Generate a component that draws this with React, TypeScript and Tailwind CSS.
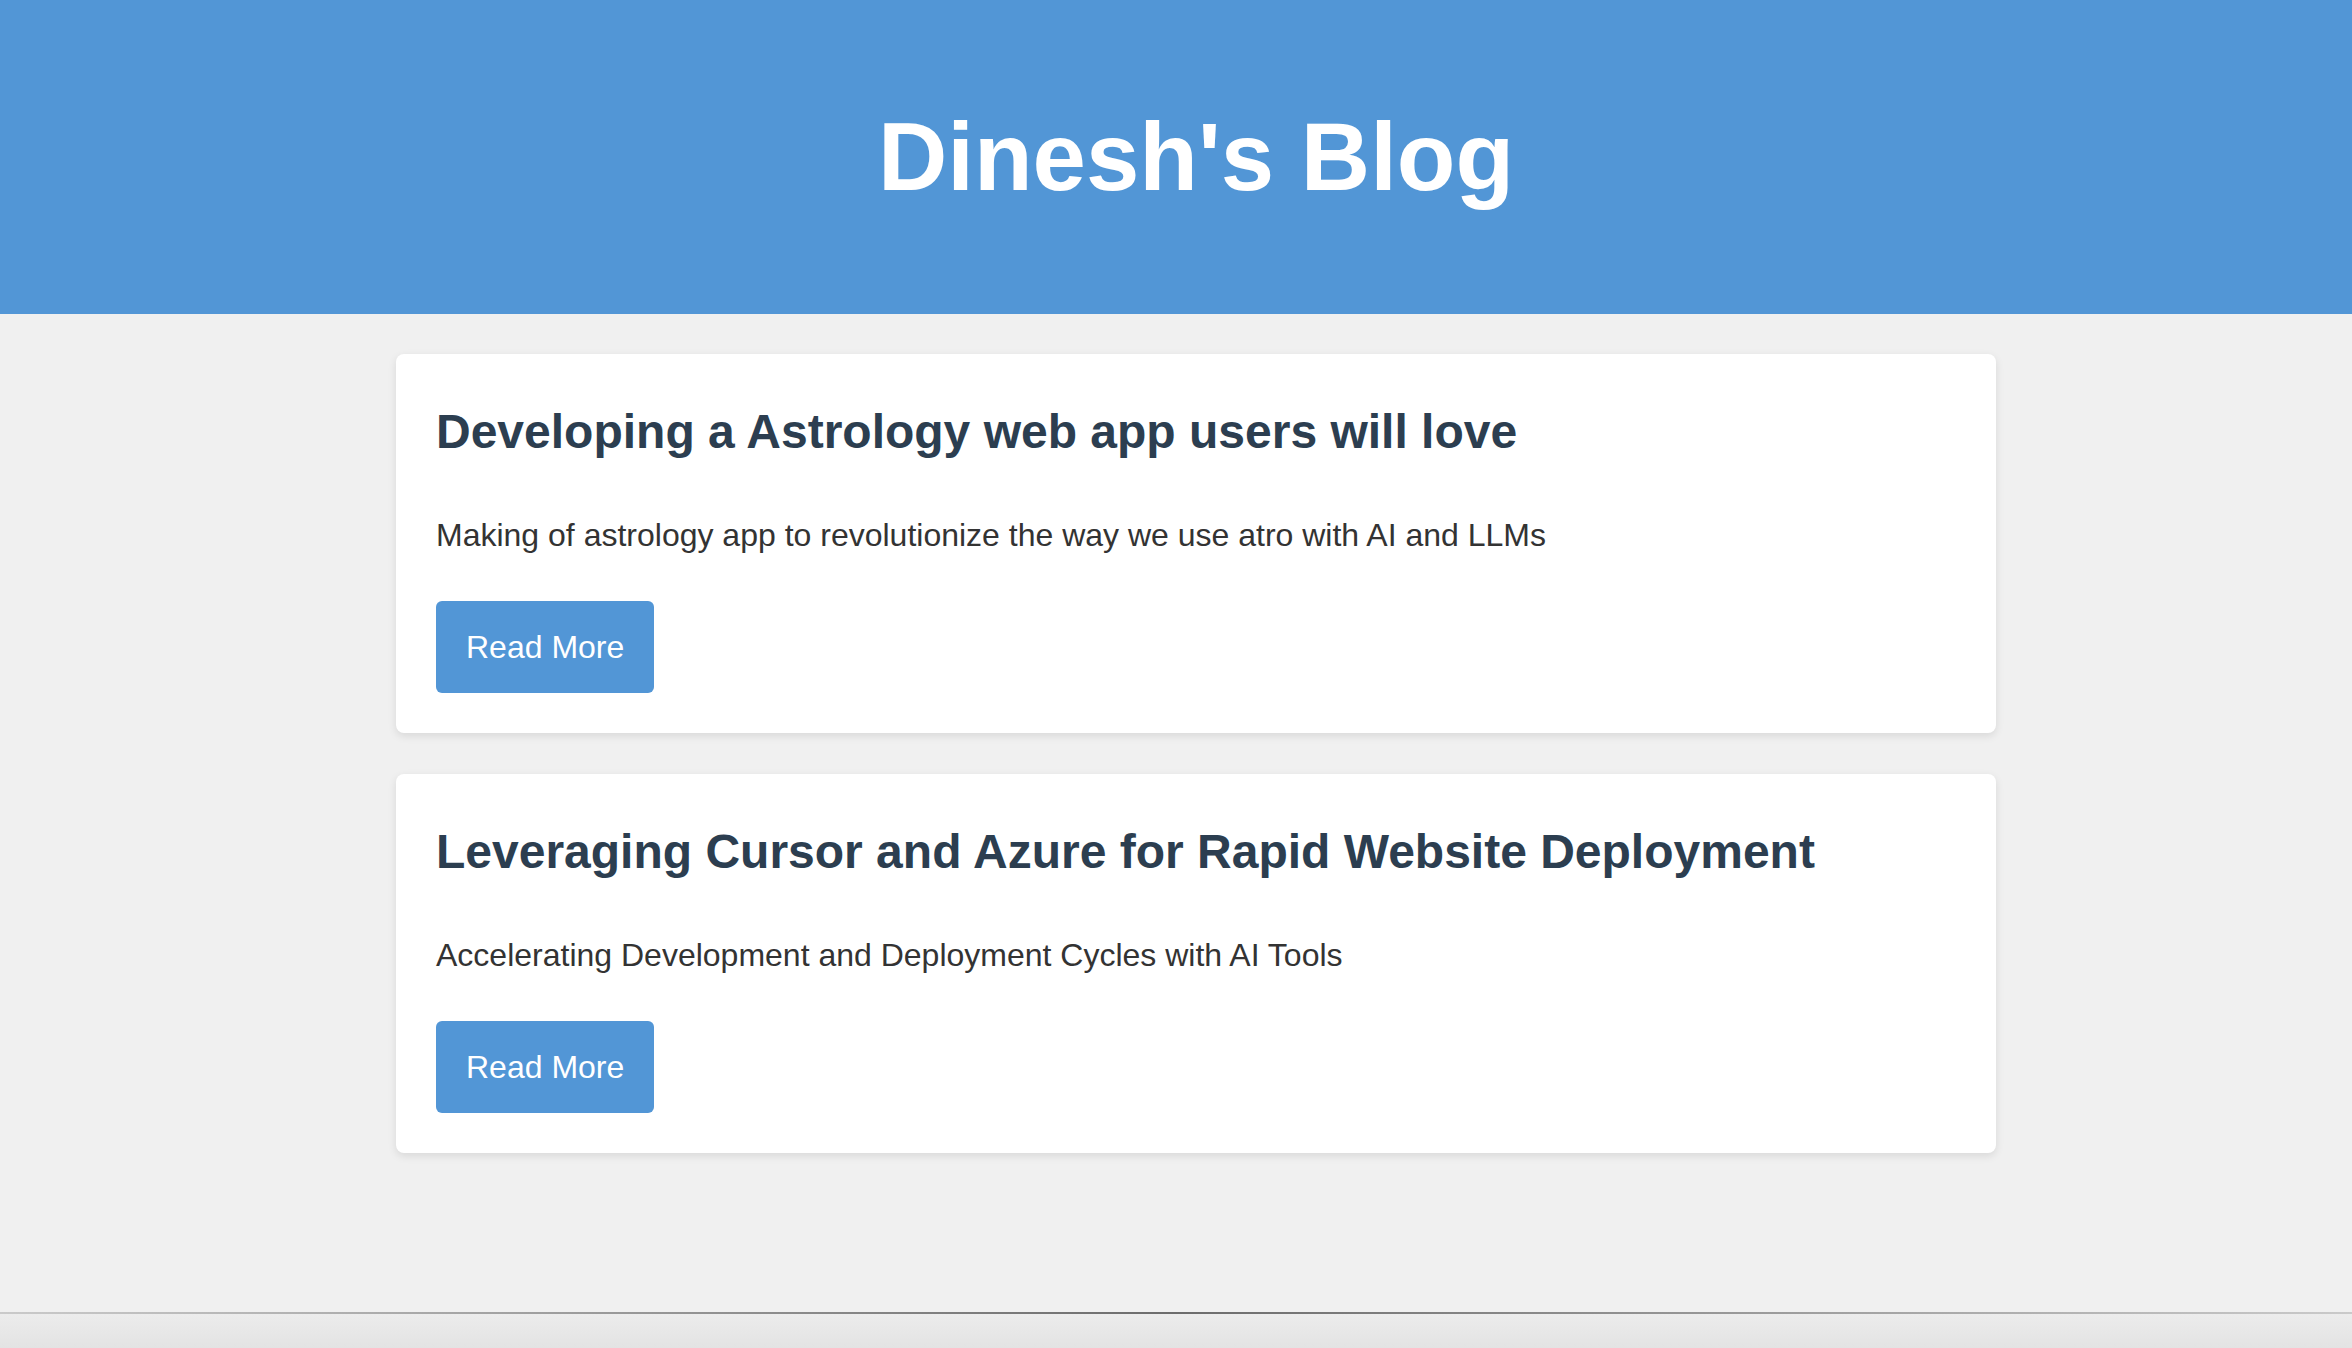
import React from "react";

const posts = [
  {
    title: "Developing a Astrology web app users will love",
    desc: "Making of astrology app to revolutionize the way we use atro with AI and LLMs",
  },
  {
    title: "Leveraging Cursor and Azure for Rapid Website Deployment",
    desc: "Accelerating Development and Deployment Cycles with AI Tools",
  },
];

export default function App() {
  return (
    <div
      className="h-screen flex flex-col bg-[#f0f0f0] overflow-hidden"
      style={{ fontFamily: '"Liberation Sans", Arial, sans-serif' }}
    >
      <header className="bg-[#5296d6] py-[102px] pl-[40px]">
        <h1 className="text-center text-white font-bold text-[96px] leading-[110px]">
          Dinesh's Blog
        </h1>
      </header>
      <main className="flex-1 pl-[40px] pt-[40px]">
        <div className="w-[1600px] mx-auto flex flex-col gap-[41px]">
          {posts.map((p) => (
            <article
              key={p.title}
              className="bg-white rounded-[8px] shadow-[0_3px_9px_rgba(0,0,0,0.1)] px-[40px] pt-[49px] pb-[40px]"
            >
              <h2 className="text-[#2c3e50] font-bold text-[48px] leading-[58px]">
                {p.title}
              </h2>
              <p className="text-[#333333] text-[32px] leading-[38px] mt-[55px]">
                {p.desc}
              </p>
              <button className="mt-[47px] bg-[#5296d6] text-white text-[32px] leading-[38px] px-[30px] py-[27px] rounded-[6px]">
                Read More
              </button>
            </article>
          ))}
        </div>
      </main>
      <div className="h-[2px] bg-[linear-gradient(to_right,#cacaca,#6c6c6c_50%,#cacaca)]" />
      <div className="h-[34px] bg-[linear-gradient(to_bottom,#ececec,#e3e3e3)]" />
    </div>
  );
}
